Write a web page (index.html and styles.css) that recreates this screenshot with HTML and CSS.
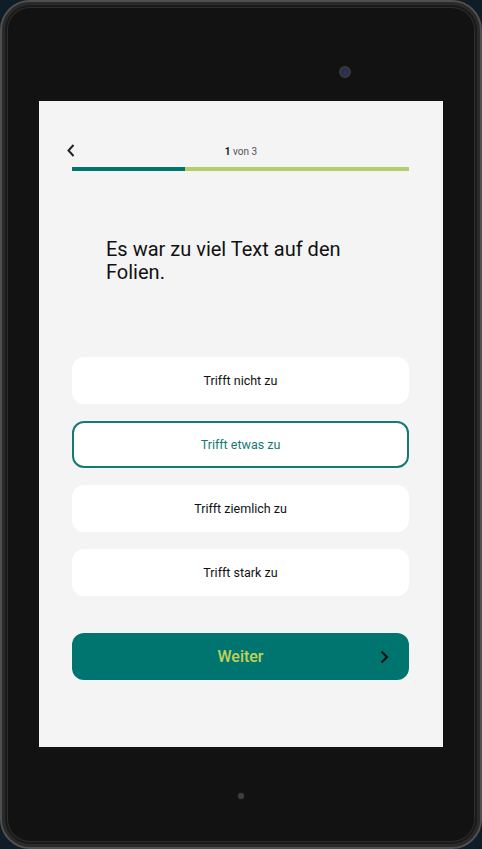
FILE: index.html
```html
<!DOCTYPE html>
<html lang="de">
<head>
<meta charset="utf-8">
<title>Umfrage</title>
<link rel="stylesheet" href="styles.css">
</head>
<body>
<div class="device">
  <div class="camera"><div class="lens"></div></div>
  <div class="screen">
    <div class="header">
      <svg class="back" width="8" height="13" viewBox="0 0 8 13"><path d="M6.5 1 L1.5 6.5 L6.5 12" fill="none" stroke="#222" stroke-width="2"/></svg>
      <div class="counter"><b>1</b> von 3</div>
    </div>
    <div class="progress"><div class="progress-fill"></div></div>
    <div class="question">Es war zu viel Text auf den Folien.</div>
    <div class="options">
      <div class="option">Trifft nicht zu</div>
      <div class="option selected">Trifft etwas zu</div>
      <div class="option">Trifft ziemlich zu</div>
      <div class="option">Trifft stark zu</div>
    </div>
    <div class="next">
      <span class="next-label">Weiter</span>
      <svg class="next-icon" width="9" height="14" viewBox="0 0 9 14"><path d="M1.5 1.5 L7 7 L1.5 12.5" fill="none" stroke="#111" stroke-width="2.2"/></svg>
    </div>
  </div>
  <div class="home-dot"></div>
</div>
</body>
</html>
```

FILE: styles.css
```css
html, body {
  margin: 0;
  padding: 0;
  background: #0e1d26;
}
body {
  width: 482px;
  height: 849px;
  overflow: hidden;
  font-family: Roboto, "Noto Sans", sans-serif;
}
.device {
  position: relative;
  box-sizing: border-box;
  width: 482px;
  height: 849px;
  border-radius: 30px;
  background: #121212;
  border: 2px solid #505050;
  box-shadow: inset 0 0 0 3px #2a2a2a, inset 0 0 0 5px #1a1a1a, inset 0 0 0 6px #2c2c2c;
  padding: 99px 0 0 37px;
}
.camera {
  position: absolute;
  left: 337px;
  top: 64px;
  width: 12px;
  height: 12px;
  border-radius: 50%;
  background: #2e2e34;
  border: 2px solid #3a3a3f;
  box-sizing: border-box;
  display: flex;
  align-items: center;
  justify-content: center;
}
.lens {
  width: 5px;
  height: 5px;
  border-radius: 50%;
  background: #2a2f7a;
}
.home-dot {
  position: absolute;
  left: 236px;
  top: 791px;
  width: 6px;
  height: 6px;
  border-radius: 50%;
  background: #3d3d3d;
  box-shadow: 0 0 2px #333;
}
.screen {
  box-sizing: border-box;
  width: 404px;
  height: 646px;
  background: #f4f4f4;
  padding: 40px 34px 0 33px;
  display: flex;
  flex-direction: column;
}
.header {
  position: relative;
  height: 20px;
  display: flex;
  align-items: center;
  justify-content: center;
}
.back {
  position: absolute;
  left: -5px;
  top: 3px;
}
.counter {
  font-size: 10px;
  color: #555;
  margin-left: 1px;
}
.counter b {
  color: #222;
  font-weight: 700;
}
.progress {
  margin-top: 6px;
  height: 4px;
  background: #b3cf6b;
}
.progress-fill {
  width: 33.5%;
  height: 100%;
  background: #00756f;
}
.question {
  margin-top: 67px;
  padding: 0 34px;
  font-size: 20px;
  line-height: 23px;
  color: #111;
}
.options {
  margin-top: 73px;
  display: flex;
  flex-direction: column;
  gap: 17px;
}
.option {
  box-sizing: border-box;
  height: 47px;
  border-radius: 12px;
  background: #fff;
  display: flex;
  align-items: center;
  justify-content: center;
  font-size: 12.5px;
  font-weight: 400;
  color: #111;
}
.option.selected {
  border: 2px solid #137a74;
  color: #167a73;
}
.next {
  margin-top: 37px;
  height: 47px;
  border-radius: 12px;
  background: #00756f;
  position: relative;
  display: flex;
  align-items: center;
  justify-content: center;
}
.next-label {
  font-size: 16px;
  font-weight: 500;
  color: #bfd35a;
}
.next-icon {
  position: absolute;
  right: 20px;
  top: 17px;
}
```
